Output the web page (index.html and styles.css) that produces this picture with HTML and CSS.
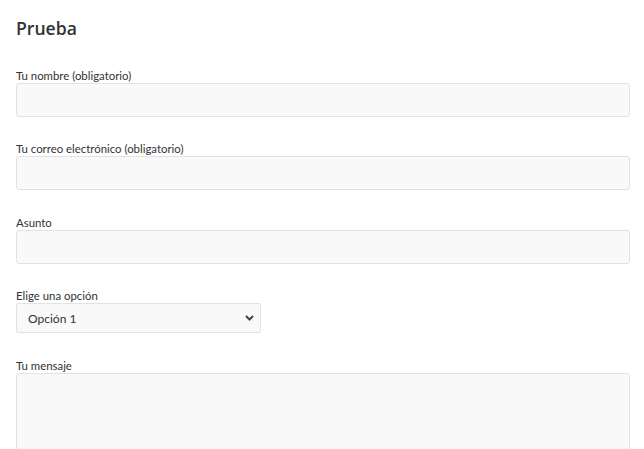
FILE: index.html
```html
<!DOCTYPE html>
<html lang="es">
  <head>
    <meta charset="UTF-8">
    <meta name="viewport" content="width=device-width, initial-scale=1.0">
    <title>Prueba</title>
    <link rel="stylesheet" href="styles.css">
  </head>
<body>
  <h1>Prueba</h1>
  <form class="contact">
    <label class="field">
      <span>Tu nombre (obligatorio)</span>
      <input name="name" type="text">
    </label>
    <label class="field">
      <span>Tu correo electrónico (obligatorio)</span>
      <input name="email" type="email">
    </label>
    <label class="field">
      <span>Asunto</span>
      <input name="subject" type="text">
    </label>
    <label class="field">
      <span>Elige una opción</span>
      <div class="select">
        <select name="option">
          <option>Opción 1</option>
          <option>Opción 2</option>
        </select>
        <svg class="chevron" width="9" height="6" viewBox="0 0 9 6">
          <path d="M1 1 L4.5 4.5 L8 1" fill="none" stroke="#444" stroke-width="2"/>
        </svg>
      </div>
    </label>
    <label class="field">
      <span>Tu mensaje</span>
      <textarea name="message"></textarea>
    </label>
  </form>
</body>
</html>
```

FILE: styles.css
```css
body {
  margin: 0;
  padding: 0 14px 0 16px;
  background-color: #fff;
  color: #333;
  font-family: Lato, "Open Sans", sans-serif;
}
h1 {
  margin: 15px 0 27.5px;
  font-family: "Open Sans", sans-serif;
  font-size: 17.6px;
  font-weight: 600;
  line-height: 26px;
  color: #333;
}
.contact {
  display: flex;
  flex-direction: column;
  gap: 25.5px;
}
.field {
  display: flex;
  flex-direction: column;
}
.field span {
  font-size: 11.4px;
  line-height: 14px;
  color: #333;
}
input,
textarea,
select {
  box-sizing: border-box;
  margin: 0;
  border: 1px solid #e2e2e2;
  border-radius: 3px;
  background-color: #f9f9f9;
  font-family: Lato, sans-serif;
  color: #333;
}
input {
  width: 100%;
  height: 34px;
}
textarea {
  width: 100%;
  height: 120px;
  resize: none;
}
.select {
  position: relative;
  width: 245px;
}
select {
  appearance: none;
  width: 100%;
  height: 30px;
  padding: 0 0 0 11px;
  border-radius: 2px;
  font-size: 12px;
}
.chevron {
  position: absolute;
  right: 7px;
  top: 12px;
  pointer-events: none;
}
```
